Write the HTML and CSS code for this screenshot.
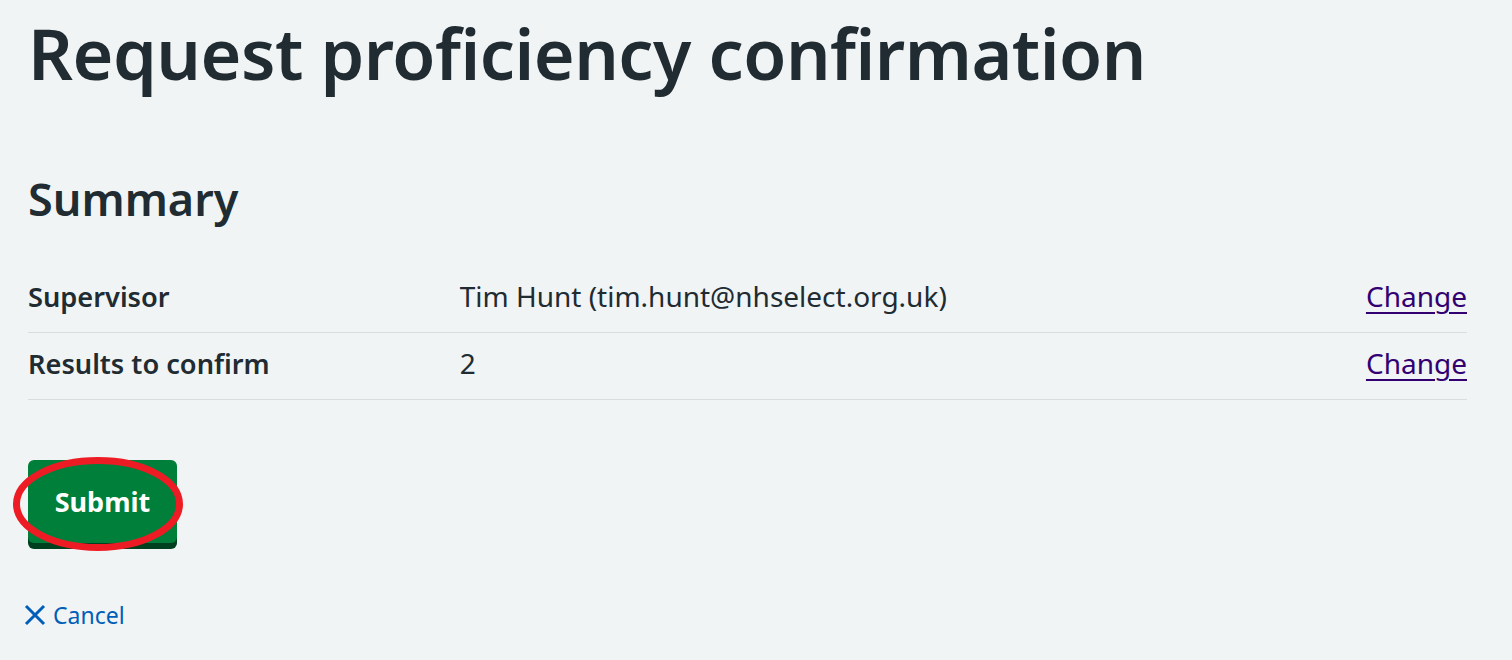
FILE: index.html
```html
<!DOCTYPE html>
<html lang="en">
<head>
<meta charset="utf-8">
<title>Request proficiency confirmation</title>
<link rel="stylesheet" href="styles.css">
</head>
<body>
<main class="page">
  <h1 class="title">Request proficiency confirmation</h1>
  <h2 class="subtitle">Summary</h2>
  <dl class="summary">
    <div class="summary-row">
      <dt class="summary-key">Supervisor</dt>
      <dd class="summary-value">Tim Hunt (tim.hunt@nhselect.org.uk)</dd>
      <dd class="summary-action"><a href="#" class="change-link">Change</a></dd>
    </div>
    <div class="summary-row">
      <dt class="summary-key">Results to confirm</dt>
      <dd class="summary-value">2</dd>
      <dd class="summary-action"><a href="#" class="change-link">Change</a></dd>
    </div>
  </dl>
  <div class="button-wrap">
    <button class="submit-button" type="submit">Submit</button>
    <svg class="highlight" width="174" height="98" viewBox="0 0 174 98" aria-hidden="true">
      <ellipse cx="87" cy="49" rx="81.5" ry="43.5" fill="none" stroke="#ed1c24" stroke-width="7"/>
    </svg>
  </div>
  <a href="#" class="cancel-link">
    <svg class="cancel-icon" width="22" height="22" viewBox="0 0 22 22" aria-hidden="true">
      <path d="M2 2 L20 20 M20 2 L2 20" stroke="#005eb8" stroke-width="3" stroke-linecap="butt" fill="none"/>
    </svg>
    <span>Cancel</span>
  </a>
</main>
</body>
</html>
```
FILE: styles.css
```css
html, body {
  margin: 0;
  padding: 0;
  background: #f0f4f5;
}
body {
  font-family: "Noto Sans", "Open Sans", sans-serif;
  color: #212b32;
}
.page {
  padding: 0 45px 0 28px;
}
.title {
  margin: 0;
  padding-top: 8px;
  font-size: 70px;
  line-height: 90px;
  font-weight: 600;
  letter-spacing: -0.5px;
}
.subtitle {
  margin: 71px 0 0;
  font-size: 45px;
  line-height: 60px;
  font-weight: 600;
}
.summary {
  margin: 37px 0 0;
}
.summary-row {
  display: flex;
  align-items: baseline;
  border-bottom: 1px solid #d8dde0;
  padding: 9px 0 15px;
  font-size: 28px;
  line-height: 42px;
}
.summary-key {
  width: 30%;
  font-size: 27.2px;
  line-height: 38px;
  font-weight: 600;
  margin: 0;
}
.summary-value {
  width: 50%;
  margin: 0;
}
.summary-action {
  width: 20%;
  margin: 0;
  text-align: right;
}
.change-link {
  color: #330072;
  text-decoration: underline;
  text-underline-offset: 5px;
  text-decoration-thickness: 2px;
}
.button-wrap {
  position: relative;
  margin-top: 60px;
  width: 149px;
}
.submit-button {
  display: block;
  width: 149px;
  height: 83px;
  border: 0;
  border-radius: 6px;
  background: #007f3b;
  box-shadow: 0 6px 0 #00401e;
  color: #ffffff;
  font-family: "Noto Sans", "Open Sans", sans-serif;
  font-size: 27px;
  font-weight: 700;
  padding: 0;
}
.highlight {
  position: absolute;
  left: -17px;
  top: -5px;
}
.cancel-link {
  display: inline-flex;
  align-items: center;
  gap: 7px;
  margin-top: 57px;
  margin-left: -4px;
  color: #005eb8;
  text-decoration: none;
  font-size: 23px;
  line-height: 30px;
}
```
